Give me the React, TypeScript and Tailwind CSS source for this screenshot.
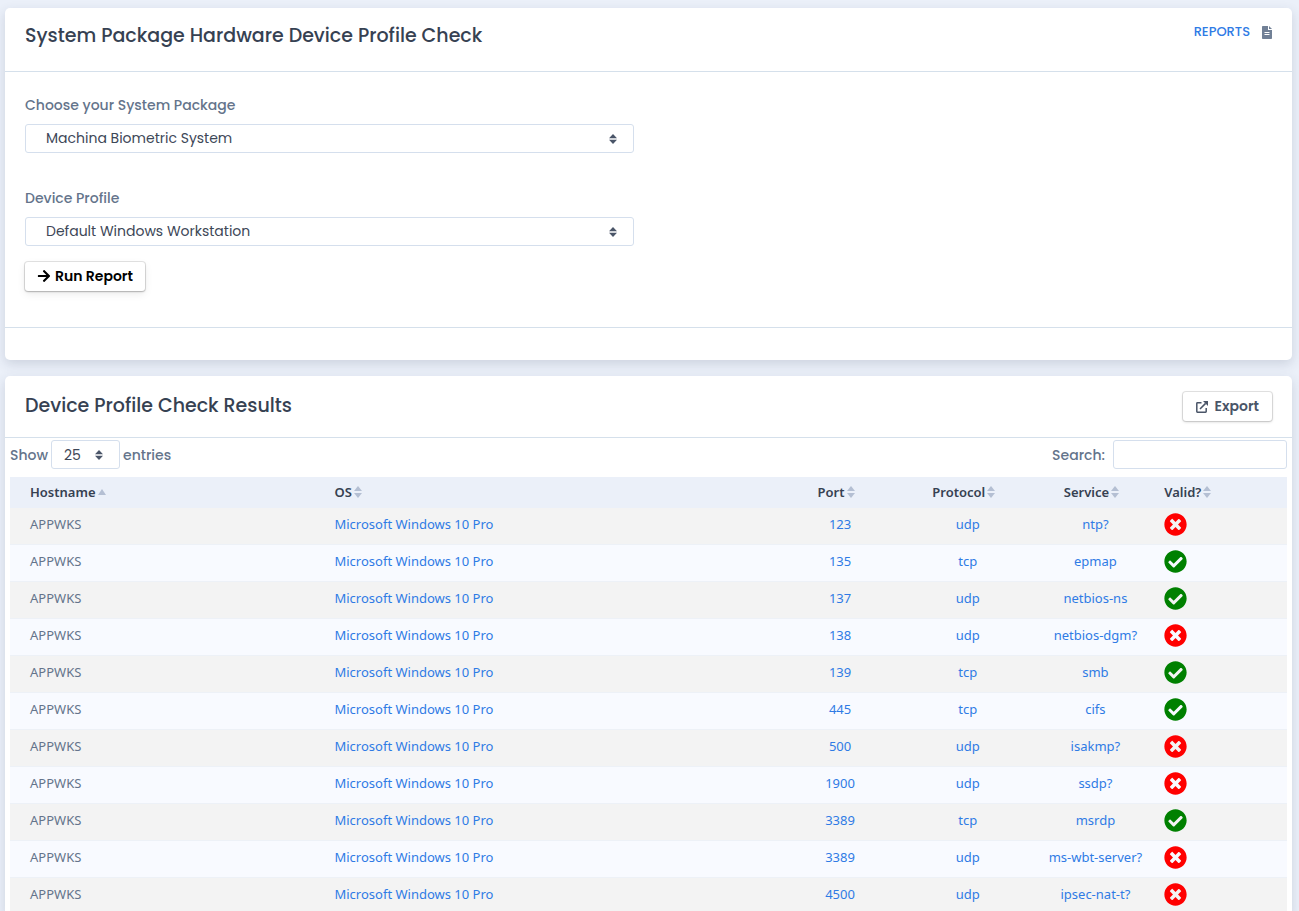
import { useId, useState } from "react";
import { FaArrowRight, FaCheckCircle, FaTimesCircle } from "react-icons/fa";

type Result = {
  host: string;
  os: string;
  port: number;
  protocol: string;
  service: string;
  valid: boolean;
};

const os = "Microsoft Windows 10 Pro";

const results: Result[] = [
  { host: "APPWKS", os, port: 123, protocol: "udp", service: "ntp?", valid: false },
  { host: "APPWKS", os, port: 135, protocol: "tcp", service: "epmap", valid: true },
  { host: "APPWKS", os, port: 137, protocol: "udp", service: "netbios-ns", valid: true },
  { host: "APPWKS", os, port: 138, protocol: "udp", service: "netbios-dgm?", valid: false },
  { host: "APPWKS", os, port: 139, protocol: "tcp", service: "smb", valid: true },
  { host: "APPWKS", os, port: 445, protocol: "tcp", service: "cifs", valid: true },
  { host: "APPWKS", os, port: 500, protocol: "udp", service: "isakmp?", valid: false },
  { host: "APPWKS", os, port: 1900, protocol: "udp", service: "ssdp?", valid: false },
  { host: "APPWKS", os, port: 3389, protocol: "tcp", service: "msrdp", valid: true },
  { host: "APPWKS", os, port: 3389, protocol: "udp", service: "ms-wbt-server?", valid: false },
  { host: "APPWKS", os, port: 4500, protocol: "udp", service: "ipsec-nat-t?", valid: false },
];

const columns = [
  { label: "Hostname", className: "w-[24%] pl-5 text-left", sorted: true },
  { label: "OS", className: "w-[36%] pl-[18px] text-left", sorted: false },
  { label: "Port", className: "w-[10%] pr-2 text-center", sorted: false },
  { label: "Protocol", className: "w-[10%] pr-2 text-center", sorted: false },
  { label: "Service", className: "w-[10%] pr-2 text-center", sorted: false },
  { label: "Valid?", className: "w-[10%] pl-[5px] text-left", sorted: false },
];

function SortArrows({ className }: { className: string }) {
  return (
    <svg viewBox="0 0 8 12" preserveAspectRatio="none" className={className} fill="currentColor" aria-hidden="true">
      <path d="M4 0 8 5H0z" />
      <path d="M4 12 0 7h8z" />
    </svg>
  );
}

function SortedArrow({ className }: { className: string }) {
  return (
    <svg viewBox="0 0 8 12" className={className} fill="currentColor" aria-hidden="true">
      <path d="M4 3 8 9H0z" />
    </svg>
  );
}

function ReportIcon() {
  return (
    <svg viewBox="0 0 10 13" className="h-[13px] w-[10px] text-[#718096]" aria-hidden="true">
      <path fill="currentColor" d="M.8 0H6v4h4v8.2a.8.8 0 0 1-.8.8H.8a.8.8 0 0 1-.8-.8V.8A.8.8 0 0 1 .8 0zM7 0l3 3H7z" />
      <path stroke="#fff" d="M2.5 6.5h5M2.5 8.5h5" />
    </svg>
  );
}

function ExportIcon() {
  return (
    <svg viewBox="0 -2 12 14" className="h-[14px] w-3" aria-hidden="true">
      <path
        fill="none"
        stroke="currentColor"
        strokeWidth="1.5"
        d="M5.5 1.8H1.4a.6.6 0 0 0-.6.6v8.2c0 .4.3.6.6.6h8.2c.4 0 .6-.2.6-.6V7M4 8l5.6-5.6"
      />
      <path fill="currentColor" d="M7 0h5v5z" />
    </svg>
  );
}

function SelectField({ label, options }: { label: string; options: string[] }) {
  const id = useId();
  return (
    <div>
      <label htmlFor={id} className="block text-sm leading-5 font-medium text-[#64748b]">
        {label}
      </label>
      <div className="relative mt-[9px]">
        <select
          id={id}
          className="block h-[29px] w-full appearance-none rounded-[3px] border border-[#d5dfed] bg-white px-5 pb-[2px] text-sm text-[#3d4757]"
        >
          {options.map((option) => (
            <option key={option}>{option}</option>
          ))}
        </select>
        <SortArrows className="pointer-events-none absolute top-[10px] right-[17px] h-[10px] w-2 text-[#4a5568]" />
      </div>
    </div>
  );
}

export default function App() {
  const [search, setSearch] = useState("");
  const rows = results.filter((row) => Object.values(row).join(" ").toLowerCase().includes(search.toLowerCase()));

  return (
    <div className="h-screen overflow-hidden bg-[#ebf0f9] pt-2 pr-[7px] pl-[5px] font-['Poppins','Inter',sans-serif] text-[#64748b]">
      <section className="rounded-[5px] bg-white shadow-[0_4px_12px_rgba(45,55,85,0.16)]">
        <header className="flex h-16 items-start justify-between border-b border-[#d5e0eb] px-5 pt-[14px]">
          <h1 className="text-[19px] leading-7 font-medium text-[#364152]">
            System Package Hardware Device Profile Check
          </h1>
          <a href="#reports" className="flex items-center gap-3 text-[13px] leading-5 font-medium text-[#2f7be5]">
            REPORTS
            <ReportIcon />
          </a>
        </header>

        <form className="h-64 border-b border-[#d5e0eb] px-5 pt-[23px]" onSubmit={(e) => e.preventDefault()}>
          <div className="flex w-1/2 flex-col gap-[35px] pr-[15px]">
            <SelectField label="Choose your System Package" options={["Machina Biometric System"]} />
            <SelectField label="Device Profile" options={["Default Windows Workstation"]} />
          </div>
          <button
            type="submit"
            className="mt-4 flex h-[29px] items-center gap-1 rounded-[3px] bg-white px-3 pb-px text-sm font-semibold text-black shadow-[0_0_0_1px_rgba(0,0,0,0.1),0_1px_2px_rgba(0,0,0,0.2),0_3px_8px_rgba(0,0,0,0.08)]"
          >
            <FaArrowRight className="h-[14px] w-[14px]" />
            Run Report
          </button>
        </form>
        <footer className="h-8" />
      </section>

      <section className="mt-4 rounded-[5px] bg-white shadow-[0_4px_12px_rgba(45,55,85,0.16)]">
        <header className="flex h-[62px] items-center justify-between border-b border-[#d5e0eb] px-5 pb-px">
          <h2 className="text-[19px] leading-[30px] font-medium text-[#364152]">Device Profile Check Results</h2>
          <button
            type="button"
            className="flex h-[29px] items-center gap-[6px] rounded-[3px] bg-white px-[13px] text-sm font-semibold text-[#4a5568] shadow-[0_0_0_1px_rgba(0,0,0,0.1),0_1px_3px_rgba(0,0,0,0.18)]"
          >
            <ExportIcon />
            Export
          </button>
        </header>

        <div className="px-[5px] pt-[2px]">
          <div className="flex items-center justify-between text-sm font-medium">
            <label className="flex items-center gap-[3px]">
              Show
              <span className="relative">
                <select className="block h-[29px] w-[69px] appearance-none rounded-[3px] border border-[#d5dfed] bg-white pl-3 text-sm font-normal text-[#3d4757]">
                  <option>25</option>
                  <option>50</option>
                  <option>100</option>
                </select>
                <SortArrows className="pointer-events-none absolute top-[10px] right-[17px] h-[10px] w-2 text-[#4a5568]" />
              </span>
              entries
            </label>
            <label className="flex items-center gap-2">
              Search:
              <input
                type="search"
                value={search}
                onChange={(e) => setSearch(e.target.value)}
                className="h-[29px] w-[174px] rounded-[3px] border border-[#d5dfed] bg-white px-2"
              />
            </label>
          </div>

          <table className="mt-2 w-full table-fixed border-separate border-spacing-0 font-['Noto_Sans',sans-serif] text-[13px] leading-5">
            <thead className="bg-[#ebf0f9] text-[#364152]">
              <tr className="h-[31px]">
                {columns.map((column) => (
                  <th key={column.label} scope="col" className={`pb-[2px] font-semibold ${column.className}`}>
                    <span className="inline-flex items-center gap-[2px]">
                      {column.label}
                      {column.sorted ? (
                        <SortedArrow className="h-3 w-2 text-[#b4bfd3]" />
                      ) : (
                        <SortArrows className="h-3 w-2 text-[#b4bfd3]" />
                      )}
                    </span>
                  </th>
                ))}
              </tr>
            </thead>
            <tbody className="[&_td]:border-b [&_td]:border-[#edf1f7] [&_td]:pb-1">
              {rows.map((row) => (
                <tr key={`${row.port}-${row.protocol}`} className="h-[37px] odd:bg-[#f3f3f3] even:bg-[#f8faff]">
                  <td className="pl-5">{row.host}</td>
                  <td className="pl-[18px]">
                    <a href="#os" className="text-[#2f7be5]">{row.os}</a>
                  </td>
                  <td className="text-center">
                    <a href="#port" className="text-[#2f7be5]">{row.port}</a>
                  </td>
                  <td className="text-center">
                    <a href="#protocol" className="text-[#2f7be5]">{row.protocol}</a>
                  </td>
                  <td className="text-center">
                    <a href="#service" className="text-[#2f7be5]">{row.service}</a>
                  </td>
                  <td className="pl-[5px]">
                    {row.valid ? (
                      <FaCheckCircle className="h-[23px] w-[23px] text-[#008000]" title="Valid" />
                    ) : (
                      <FaTimesCircle className="h-[23px] w-[23px] text-[#ff0000]" title="Not valid" />
                    )}
                  </td>
                </tr>
              ))}
            </tbody>
          </table>
        </div>
      </section>
    </div>
  );
}
